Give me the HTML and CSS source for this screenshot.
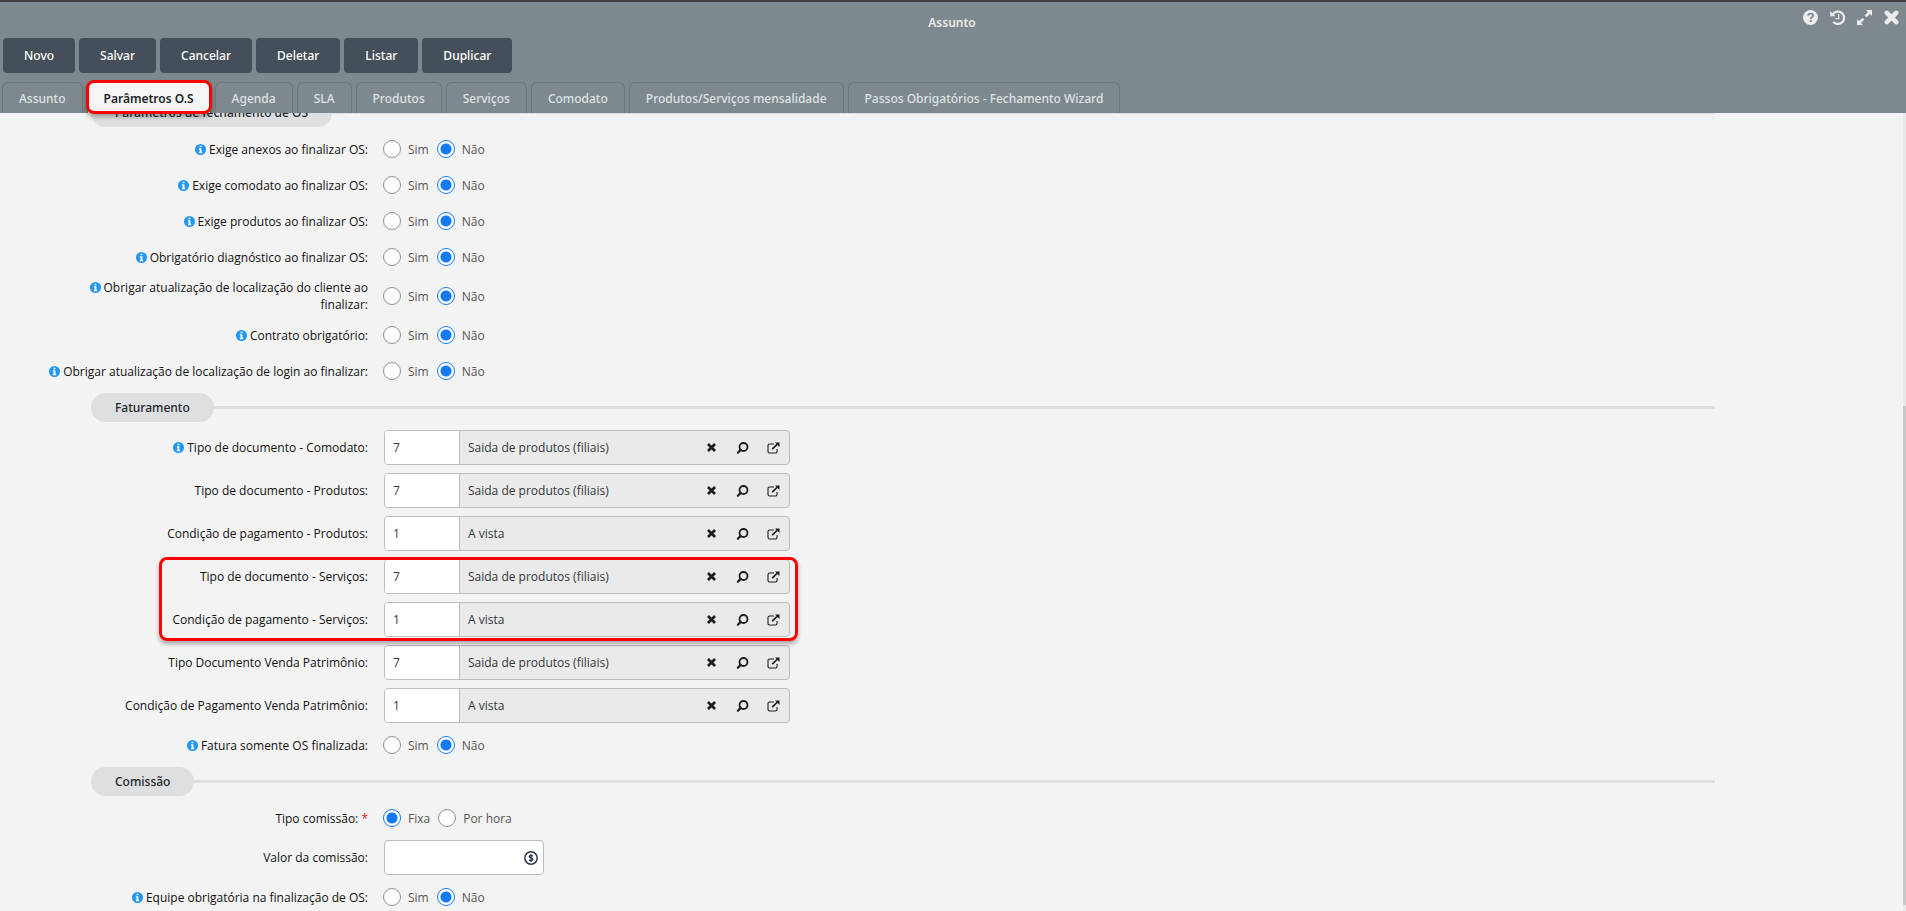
FILE: index.html
```html
<!DOCTYPE html>
<html lang="pt-BR">
<head>
<meta charset="utf-8">
<title>Assunto</title>
<link rel="stylesheet" href="styles.css">
</head>
<body>
<svg class="sprite" aria-hidden="true">
  <symbol id="i-info" viewBox="0 0 12 12"><circle cx="6" cy="6" r="6" fill="#2196f3"/><path d="M5 1.800h2v1.700H5zM4.200 4.600H7v3.900h.8V10H4.200V8.500H5V6h-.8z" fill="#fff"/></symbol>
  <symbol id="i-x" viewBox="0 0 14 14"><path d="M3 3l8 8M11 3l-8 8" fill="none" stroke="currentColor" stroke-width="4.200" stroke-linecap="square"/></symbol>
  <symbol id="i-close" viewBox="0 0 14 14"><path d="M2.600 2.600l8.800 8.800M11.400 2.600l-8.800 8.800" fill="none" stroke="currentColor" stroke-width="4.200" stroke-linecap="round"/></symbol>
  <symbol id="i-search" viewBox="0 0 12 12"><circle cx="7" cy="5" r="4" fill="none" stroke="currentColor" stroke-width="1.800"/><path d="M4.200 7.900L1.400 10.700" stroke="currentColor" stroke-width="2.200" stroke-linecap="round"/></symbol>
  <symbol id="i-ext" viewBox="0 0 13 12"><path d="M7 2H2.500A1.500 1.500 0 0 0 1 3.500v6A1.500 1.500 0 0 0 2.500 11h6A1.500 1.500 0 0 0 10 9.500V7" fill="none" stroke="currentColor" stroke-width="1.100"/><path d="M5.200 7.200L10.500 2" stroke="currentColor" stroke-width="1.700"/><path d="M8 .5h4.500V5z" fill="currentColor"/></symbol>
  <symbol id="i-help" viewBox="0 0 15 15"><circle cx="7.500" cy="7.500" r="7.500" fill="currentColor"/><path d="M5 5.600C5.300 4.200 6.300 3.600 7.500 3.600c1.400 0 2.500.8 2.500 2 0 1.700-2.300 1.700-2.300 3.300" fill="none" stroke="#7d898e" stroke-width="1.900"/><path d="M6.700 10h2v2h-2z" fill="#7d898e"/></symbol>
  <symbol id="i-history" viewBox="0 0 15 15"><path d="M2.600 4.600A6.200 6.200 0 1 1 3.300 11.900" fill="none" stroke="currentColor" stroke-width="2.200"/><path d="M.2.900v5.300h5.300z" fill="currentColor"/><path d="M8.700 4.200v4.400H5.400" fill="none" stroke="currentColor" stroke-width="1.400"/></symbol>
  <symbol id="i-expand" viewBox="0 0 15 15"><path d="M9 0h6v6zM0 9v6h6z" fill="currentColor"/><path d="M12.500 2.500L8.600 6.400M6.400 8.600L2.500 12.500" stroke="currentColor" stroke-width="2.600"/></symbol>
  <symbol id="i-coin" viewBox="0 0 14 14"><circle cx="7" cy="7" r="6.200" fill="none" stroke="currentColor" stroke-width="1.500"/><path d="M8.900 5.200C8.500 4.400 5.200 4 5.200 5.700c0 1.600 3.700.9 3.700 2.600C8.900 10 5.500 9.700 5.100 8.700M7 3v8" fill="none" stroke="currentColor" stroke-width="1.300"/></symbol>
</svg>
<header class="header">
  <div class="titlebar">
    <h1 class="title">Assunto</h1>
    <div class="tools">
      <button type="button" aria-label="Ajuda"><svg><use href="#i-help"/></svg></button>
      <button type="button" aria-label="Histórico"><svg><use href="#i-history"/></svg></button>
      <button type="button" aria-label="Expandir"><svg><use href="#i-expand"/></svg></button>
      <button type="button" aria-label="Fechar"><svg><use href="#i-close"/></svg></button>
    </div>
  </div>
  <div class="actions">
    <button type="button">Novo</button>
    <button type="button">Salvar</button>
    <button type="button">Cancelar</button>
    <button type="button">Deletar</button>
    <button type="button">Listar</button>
    <button type="button">Duplicar</button>
  </div>
  <nav class="tabs">
    <button type="button">Assunto</button>
    <button type="button" class="active">Parâmetros O.S</button>
    <button type="button">Agenda</button>
    <button type="button">SLA</button>
    <button type="button">Produtos</button>
    <button type="button">Serviços</button>
    <button type="button">Comodato</button>
    <button type="button">Produtos/Serviços mensalidade</button>
    <button type="button">Passos Obrigatórios - Fechamento Wizard</button>
  </nav>
</header>
<div class="body">
<form class="form">
  <h2 class="section"><span>Parâmetros de fechamento de OS</span></h2>
  <div class="row" role="group" aria-labelledby="l1"><span class="label" id="l1"><svg class="info"><use href="#i-info"/></svg>Exige anexos ao finalizar OS:</span><div class="radios"><label><input type="radio" name="r1">Sim</label><label><input type="radio" name="r1" checked>Não</label></div></div>
  <div class="row" role="group" aria-labelledby="l2"><span class="label" id="l2"><svg class="info"><use href="#i-info"/></svg>Exige comodato ao finalizar OS:</span><div class="radios"><label><input type="radio" name="r2">Sim</label><label><input type="radio" name="r2" checked>Não</label></div></div>
  <div class="row" role="group" aria-labelledby="l3"><span class="label" id="l3"><svg class="info"><use href="#i-info"/></svg>Exige produtos ao finalizar OS:</span><div class="radios"><label><input type="radio" name="r3">Sim</label><label><input type="radio" name="r3" checked>Não</label></div></div>
  <div class="row" role="group" aria-labelledby="l4"><span class="label" id="l4"><svg class="info"><use href="#i-info"/></svg>Obrigatório diagnóstico ao finalizar OS:</span><div class="radios"><label><input type="radio" name="r4">Sim</label><label><input type="radio" name="r4" checked>Não</label></div></div>
  <div class="row" role="group" aria-labelledby="l5"><span class="label" id="l5"><svg class="info"><use href="#i-info"/></svg>Obrigar atualização de localização do cliente ao finalizar:</span><div class="radios"><label><input type="radio" name="r5">Sim</label><label><input type="radio" name="r5" checked>Não</label></div></div>
  <div class="row" role="group" aria-labelledby="l6"><span class="label" id="l6"><svg class="info"><use href="#i-info"/></svg>Contrato obrigatório:</span><div class="radios"><label><input type="radio" name="r6">Sim</label><label><input type="radio" name="r6" checked>Não</label></div></div>
  <div class="row" role="group" aria-labelledby="l7"><span class="label" id="l7"><svg class="info"><use href="#i-info"/></svg>Obrigar atualização de localização de login ao finalizar:</span><div class="radios"><label><input type="radio" name="r7">Sim</label><label><input type="radio" name="r7" checked>Não</label></div></div>

  <h2 class="section"><span>Faturamento</span></h2>
  <div class="row"><label class="label" for="f1"><svg class="info"><use href="#i-info"/></svg>Tipo de documento - Comodato:</label><div class="lookup"><input id="f1" type="text" value="7"><span class="desc">Saida de produtos (filiais)</span><button type="button" aria-label="Limpar"><svg class="sm"><use href="#i-x"/></svg></button><button type="button" aria-label="Buscar"><svg><use href="#i-search"/></svg></button><button type="button" aria-label="Abrir"><svg><use href="#i-ext"/></svg></button></div></div>
  <div class="row"><label class="label" for="f2">Tipo de documento - Produtos:</label><div class="lookup"><input id="f2" type="text" value="7"><span class="desc">Saida de produtos (filiais)</span><button type="button" aria-label="Limpar"><svg class="sm"><use href="#i-x"/></svg></button><button type="button" aria-label="Buscar"><svg><use href="#i-search"/></svg></button><button type="button" aria-label="Abrir"><svg><use href="#i-ext"/></svg></button></div></div>
  <div class="row"><label class="label" for="f3">Condição de pagamento - Produtos:</label><div class="lookup"><input id="f3" type="text" value="1"><span class="desc">A vista</span><button type="button" aria-label="Limpar"><svg class="sm"><use href="#i-x"/></svg></button><button type="button" aria-label="Buscar"><svg><use href="#i-search"/></svg></button><button type="button" aria-label="Abrir"><svg><use href="#i-ext"/></svg></button></div></div>
  <div class="marked">
    <div class="row"><label class="label" for="f4">Tipo de documento - Serviços:</label><div class="lookup"><input id="f4" type="text" value="7"><span class="desc">Saida de produtos (filiais)</span><button type="button" aria-label="Limpar"><svg class="sm"><use href="#i-x"/></svg></button><button type="button" aria-label="Buscar"><svg><use href="#i-search"/></svg></button><button type="button" aria-label="Abrir"><svg><use href="#i-ext"/></svg></button></div></div>
    <div class="row"><label class="label" for="f5">Condição de pagamento - Serviços:</label><div class="lookup"><input id="f5" type="text" value="1"><span class="desc">A vista</span><button type="button" aria-label="Limpar"><svg class="sm"><use href="#i-x"/></svg></button><button type="button" aria-label="Buscar"><svg><use href="#i-search"/></svg></button><button type="button" aria-label="Abrir"><svg><use href="#i-ext"/></svg></button></div></div>
  </div>
  <div class="row"><label class="label" for="f6">Tipo Documento Venda Patrimônio:</label><div class="lookup"><input id="f6" type="text" value="7"><span class="desc">Saida de produtos (filiais)</span><button type="button" aria-label="Limpar"><svg class="sm"><use href="#i-x"/></svg></button><button type="button" aria-label="Buscar"><svg><use href="#i-search"/></svg></button><button type="button" aria-label="Abrir"><svg><use href="#i-ext"/></svg></button></div></div>
  <div class="row"><label class="label" for="f7">Condição de Pagamento Venda Patrimônio:</label><div class="lookup"><input id="f7" type="text" value="1"><span class="desc">A vista</span><button type="button" aria-label="Limpar"><svg class="sm"><use href="#i-x"/></svg></button><button type="button" aria-label="Buscar"><svg><use href="#i-search"/></svg></button><button type="button" aria-label="Abrir"><svg><use href="#i-ext"/></svg></button></div></div>
  <div class="row" role="group" aria-labelledby="l8"><span class="label" id="l8"><svg class="info"><use href="#i-info"/></svg>Fatura somente OS finalizada:</span><div class="radios"><label><input type="radio" name="r8">Sim</label><label><input type="radio" name="r8" checked>Não</label></div></div>

  <h2 class="section"><span>Comissão</span></h2>
  <div class="row" role="group" aria-labelledby="l9"><span class="label" id="l9">Tipo comissão: <b class="req">*</b></span><div class="radios"><label><input type="radio" name="r9" checked>Fixa</label><label><input type="radio" name="r9">Por hora</label></div></div>
  <div class="row"><label class="label" for="f8">Valor da comissão:</label><div class="money"><input id="f8" type="text"><svg><use href="#i-coin"/></svg></div></div>
  <div class="row" role="group" aria-labelledby="l10"><span class="label" id="l10"><svg class="info"><use href="#i-info"/></svg>Equipe obrigatória na finalização de OS:</span><div class="radios"><label><input type="radio" name="r10">Sim</label><label><input type="radio" name="r10" checked>Não</label></div></div>
</form>
<div class="scrollbar"><div class="thumb"></div></div>
</div>
</body>
</html>
```
FILE: styles.css
```css
*, *::after { box-sizing: border-box; }
body {
  margin: 0;
  height: 100vh;
  display: flex;
  flex-direction: column;
  overflow: hidden;
  background: #f3f3f3;
  color: #212529;
  font: 12px/17px "Open Sans", "Noto Sans", sans-serif;
}
button, input { font: inherit; color: inherit; margin: 0; }
button { border: 0; background: none; padding: 0; }
.sprite { display: none; }

.header {
  flex: none;
  position: relative;
  z-index: 1;
  border-top: 2px solid #453e3f;
  background: #7d898e;
  color: #ececec;
  font-family: "Noto Sans", "Open Sans", sans-serif;
}
.titlebar { display: flex; justify-content: center; height: 36px; padding: 12px 2px 0 0; }
.title { margin: 0; font-size: 12px; font-weight: 600; line-height: 17px; }
.tools { position: absolute; top: 8px; right: 7px; display: flex; gap: 12px; }
.tools button { display: flex; width: 15px; height: 15px; }
.tools svg { width: 15px; height: 15px; }

.actions { display: flex; gap: 4px; padding-left: 3px; }
.actions button {
  height: 35px;
  padding: 0 21px;
  border-radius: 4px;
  background: #454f59;
  color: #fff;
  font-weight: 500;
}
.tabs { display: flex; gap: 4px; padding: 9px 2px 0; }
.tabs button {
  position: relative;
  height: 31px;
  padding: 0 16px;
  border: 1px solid #6b777f;
  border-bottom: 0;
  border-radius: 6px 6px 0 0;
  color: #dfe2e3;
  font-weight: 500;
  line-height: 17px;
}
.tabs .active { background: #f5f5f5; color: #212529; font-weight: 600; }
.tabs .active::after {
  content: "";
  position: absolute;
  inset: -3px -2px -1px;
  border: 3px solid #f00;
  border-radius: 8px;
  box-shadow: 0 3px 4px rgba(0, 0, 0, .3);
}

.body { flex: 1; min-height: 0; display: flex; overflow: hidden; }
.form { flex: 1; margin-top: -19px; }
.scrollbar { flex: none; width: 3px; padding-bottom: 6px; background: #e9e9e9; display: flex; flex-direction: column; justify-content: flex-end; }
.thumb { height: 63%; background: #c8c8c8; }

.section {
  display: flex;
  align-items: center;
  margin: 0 188px 0 91px;
  padding: 4px 0;
  font-family: "Noto Sans", "Open Sans", sans-serif;
  font-size: 12px;
  font-weight: 500;
  line-height: 17px;
}
.section span { padding: 6px 24px; border-radius: 15px; background: #dedfe1; }
.section::after { content: ""; flex: 1; height: 3px; background: #dedfe0; }

.row { display: flex; align-items: center; gap: 16px; padding: 4px 0 4px 44px; }
.label { flex: 0 0 324px; text-align: right; color: #111; }
.info { width: 11px; height: 11px; margin-right: 3px; vertical-align: -1px; }
.req { color: #f02020; font-weight: 400; }

.radios { display: flex; align-items: center; gap: 8px; min-height: 28px; margin-left: -1px; color: #555; }
.radios label { display: flex; align-items: center; gap: 7px; }
.radios input {
  appearance: none;
  width: 18px;
  height: 18px;
  border: 1px solid #8a8f99;
  border-radius: 50%;
  background: #fff;
}
.radios input:checked { border-color: #1a7af0; background: radial-gradient(circle, #147af3 5px, #fff 6px); }

.lookup {
  display: flex;
  align-items: center;
  width: 406px;
  height: 35px;
  border: 1px solid #b9bec3;
  border-radius: 4px;
  background: #eaeaea;
  overflow: hidden;
  color: #33373c;
}
.lookup input {
  width: 75px;
  height: 33px;
  padding: 0 8px;
  border: 0;
  border-right: 1px solid #b9bec3;
  background: #fff;
}
.desc { flex: 1; padding-left: 8px; }
.lookup button { display: flex; align-items: center; justify-content: center; width: 31px; height: 33px; color: #1d1d1f; }
.lookup svg { width: 13px; height: 12px; }
.lookup .sm { width: 9px; height: 9px; }

.marked { position: relative; }
.marked::after {
  content: "";
  position: absolute;
  top: 2px;
  bottom: 0;
  left: 159px;
  width: 639px;
  border: 3px solid #f00;
  border-radius: 8px;
  box-shadow: 0 3px 4px rgba(0, 0, 0, .3);
  pointer-events: none;
}

.money {
  display: flex;
  align-items: center;
  width: 160px;
  height: 35px;
  padding-right: 5px;
  border: 1px solid #b9bec3;
  border-radius: 4px;
  background: #fff;
}
.money input { flex: 1; min-width: 0; padding: 0 8px; border: 0; background: none; }
.money svg { width: 14px; height: 14px; color: #2b3950; }
```
